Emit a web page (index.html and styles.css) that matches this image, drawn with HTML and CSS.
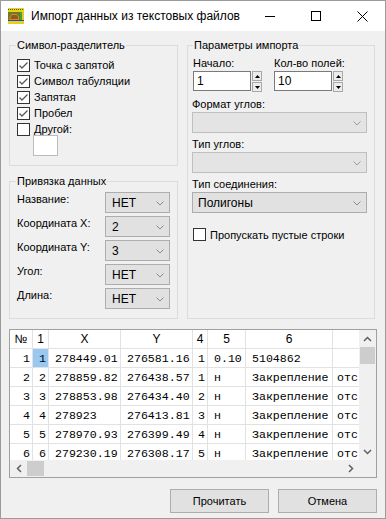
FILE: index.html
```html
<!DOCTYPE html>
<html lang="ru">
<head>
    <meta charset="UTF-8">
    <meta name="viewport" content="width=device-width, initial-scale=1.0">
    <title>Импорт данных из текстовых файлов</title>
    <link rel="stylesheet" href="styles.css">
</head>
<body>

    <div class="window">
        <!-- Title bar -->
        <div class="titlebar">
            <svg class="app-icon" width="16" height="16" viewBox="0 0 16 16">
                <rect width="16" height="16" fill="#6f7b22"/>
                <rect width="16" height="4" fill="#e4d21e"/>
                <path d="M0 1.5h16" stroke="#4d5a1a" stroke-dasharray="1 1"/>
                <path d="M1.5 11.5 L3.5 6.5 H8.5 L10.5 9 V11.5 Z" fill="#8c5a26" stroke="#e0832c"/>
                <rect x="12" y="4" width="2" height="9" fill="#3fa33c"/>
                <rect x="14" y="4" width="2" height="9" fill="#d8d020"/>
                <rect y="12" width="16" height="1" fill="#2c48c0"/>
                <rect y="13" width="16" height="3" fill="#e4d21e"/>
            </svg>
            <span class="title">Импорт данных из текстовых файлов</span>
            <div class="controls">
                <span class="ctl">
                    <svg width="10" height="10"><path d="M0 5.5h10" stroke="#000"/></svg>
                </span>
                <span class="ctl">
                    <svg width="10" height="10"><rect x="0.5" y="0.5" width="9" height="9" fill="none" stroke="#000"/></svg>
                </span>
                <span class="ctl">
                    <svg width="11" height="11"><path d="M0.5 0.5 L10.5 10.5 M10.5 0.5 L0.5 10.5" stroke="#000"/></svg>
                </span>
            </div>
        </div>

        <div class="client">
            <div class="top">
                <div class="left-col">
                    <!-- Separator -->
                    <fieldset class="group sep-group">
                        <legend>Символ-разделитель</legend>
                        <label class="check"><span class="box"><svg width="11" height="11"><path d="M1.5 5.5 L4 8 L9.5 2.5" stroke="#5a5a5a" stroke-width="1.3" fill="none"/></svg></span>Точка с запятой</label>
                        <label class="check"><span class="box"><svg width="11" height="11"><path d="M1.5 5.5 L4 8 L9.5 2.5" stroke="#5a5a5a" stroke-width="1.3" fill="none"/></svg></span>Символ табуляции</label>
                        <label class="check"><span class="box"><svg width="11" height="11"><path d="M1.5 5.5 L4 8 L9.5 2.5" stroke="#5a5a5a" stroke-width="1.3" fill="none"/></svg></span>Запятая</label>
                        <label class="check"><span class="box"><svg width="11" height="11"><path d="M1.5 5.5 L4 8 L9.5 2.5" stroke="#5a5a5a" stroke-width="1.3" fill="none"/></svg></span>Пробел</label>
                        <label class="check"><span class="box"></span>Другой:</label>
                        <div class="other-input"></div>
                    </fieldset>

                    <!-- Binding -->
                    <fieldset class="group bind-group">
                        <legend>Привязка данных</legend>
                        <div class="bind-row">
                            <span class="lbl">Название:</span>
                            <div class="combo"><span>НЕТ</span><svg width="8" height="5"><path d="M0.5 0.5 L4 4 L7.5 0.5" stroke="#8a8a8a" fill="none"/></svg></div>
                        </div>
                        <div class="bind-row">
                            <span class="lbl">Координата X:</span>
                            <div class="combo"><span>2</span><svg width="8" height="5"><path d="M0.5 0.5 L4 4 L7.5 0.5" stroke="#8a8a8a" fill="none"/></svg></div>
                        </div>
                        <div class="bind-row">
                            <span class="lbl">Координата Y:</span>
                            <div class="combo"><span>3</span><svg width="8" height="5"><path d="M0.5 0.5 L4 4 L7.5 0.5" stroke="#8a8a8a" fill="none"/></svg></div>
                        </div>
                        <div class="bind-row">
                            <span class="lbl">Угол:</span>
                            <div class="combo"><span>НЕТ</span><svg width="8" height="5"><path d="M0.5 0.5 L4 4 L7.5 0.5" stroke="#8a8a8a" fill="none"/></svg></div>
                        </div>
                        <div class="bind-row">
                            <span class="lbl">Длина:</span>
                            <div class="combo"><span>НЕТ</span><svg width="8" height="5"><path d="M0.5 0.5 L4 4 L7.5 0.5" stroke="#8a8a8a" fill="none"/></svg></div>
                        </div>
                    </fieldset>
                </div>

                <!-- Import params -->
                <fieldset class="group params-group">
                    <legend>Параметры импорта</legend>
                    <div class="spin-row">
                        <div class="spin-field">
                            <span class="field-label first">Начало:</span>
                            <div class="spin">
                                <div class="spin-input">1</div>
                                <div class="spin-btns">
                                    <span><svg width="5" height="3"><path d="M0 3 L2.5 0 L5 3Z" fill="#000"/></svg></span>
                                    <span><svg width="5" height="3"><path d="M0 0 L2.5 3 L5 0Z" fill="#000"/></svg></span>
                                </div>
                            </div>
                        </div>
                        <div class="spin-field">
                            <span class="field-label first">Кол-во полей:</span>
                            <div class="spin">
                                <div class="spin-input">10</div>
                                <div class="spin-btns">
                                    <span><svg width="5" height="3"><path d="M0 3 L2.5 0 L5 3Z" fill="#000"/></svg></span>
                                    <span><svg width="5" height="3"><path d="M0 0 L2.5 3 L5 0Z" fill="#000"/></svg></span>
                                </div>
                            </div>
                        </div>
                    </div>

                    <span class="field-label angle-fmt">Формат углов:</span>
                    <div class="combo wide disabled"><span></span><svg width="8" height="5"><path d="M0.5 0.5 L4 4 L7.5 0.5" stroke="#9a9a9a" fill="none"/></svg></div>

                    <span class="field-label">Тип углов:</span>
                    <div class="combo wide disabled"><span></span><svg width="8" height="5"><path d="M0.5 0.5 L4 4 L7.5 0.5" stroke="#9a9a9a" fill="none"/></svg></div>

                    <span class="field-label">Тип соединения:</span>
                    <div class="combo wide"><span>Полигоны</span><svg width="8" height="5"><path d="M0.5 0.5 L4 4 L7.5 0.5" stroke="#8a8a8a" fill="none"/></svg></div>

                    <label class="check skip"><span class="box"></span>Пропускать пустые строки</label>
                </fieldset>
            </div>

            <!-- Preview grid -->
            <div class="grid-box">
                <div class="viewport">
                    <div class="cells">
                        <span class="h">№</span><span class="h">1</span><span class="h">X</span><span class="h">Y</span><span class="h">4</span><span class="h">5</span><span class="h">6</span><span class="h"></span>

                        <span class="r">1</span><span class="r sel">1</span><span>278449.01</span><span>276581.16</span><span class="r">1</span><span>0.10</span><span>5104862</span><span class="last"></span>
                        <span class="r">2</span><span class="r">2</span><span>278859.82</span><span>276438.57</span><span class="r">1</span><span>н</span><span>Закрепление</span><span class="last">отс</span>
                        <span class="r">3</span><span class="r">3</span><span>278853.98</span><span>276434.40</span><span class="r">2</span><span>н</span><span>Закрепление</span><span class="last">отс</span>
                        <span class="r">4</span><span class="r">4</span><span>278923</span><span>276413.81</span><span class="r">3</span><span>н</span><span>Закрепление</span><span class="last">отс</span>
                        <span class="r">5</span><span class="r">5</span><span>278970.93</span><span>276399.49</span><span class="r">4</span><span>н</span><span>Закрепление</span><span class="last">отс</span>
                        <span class="r">6</span><span class="r">6</span><span>279230.19</span><span>276308.17</span><span class="r">5</span><span>н</span><span>Закрепление</span><span class="last">отс</span>
                    </div>
                </div>
                <div class="vscroll">
                    <span class="arrow"><svg width="9" height="6"><path d="M1 5 L4.5 1.5 L8 5" stroke="#606060" stroke-width="1.5" fill="none"/></svg></span>
                    <span class="thumb"></span>
                    <span class="track"></span>
                    <span class="arrow"><svg width="9" height="6"><path d="M1 1 L4.5 4.5 L8 1" stroke="#606060" stroke-width="1.5" fill="none"/></svg></span>
                </div>
                <div class="hscroll">
                    <span class="arrow"><svg width="6" height="9"><path d="M5 1 L1.5 4.5 L5 8" stroke="#606060" stroke-width="1.5" fill="none"/></svg></span>
                    <span class="thumb"></span>
                    <span class="track"></span>
                    <span class="arrow"><svg width="6" height="9"><path d="M1 1 L4.5 4.5 L1 8" stroke="#606060" stroke-width="1.5" fill="none"/></svg></span>
                </div>
                <div class="corner"></div>
            </div>

            <div class="buttons">
                <button class="btn">Прочитать</button>
                <button class="btn">Отмена</button>
            </div>
        </div>
    </div>

</body>
</html>
```

FILE: styles.css
```css
* {
    box-sizing: border-box;
}

body {
    margin: 0;
    font-family: "Liberation Sans", Arial, sans-serif;
    font-size: 11px;
    color: #000;
    background-color: #fff;
}

.window {
    width: 386px;
    height: 519px;
    border: 1px solid #9b9b9b;
    background-color: #f0f0f0;
    display: flex;
    flex-direction: column;
}

/* Title bar */
.titlebar {
    height: 30px;
    flex-shrink: 0;
    background-color: #fff;
    display: flex;
    align-items: center;
}

.app-icon {
    margin: 0 7px;
}

.title {
    flex: 1;
    font-size: 12px;
}

.controls {
    display: flex;
    height: 30px;
}

.ctl {
    width: 46px;
    display: flex;
    align-items: center;
    justify-content: center;
}

/* Client area */
.client {
    padding: 8px 8px 0;
}

.top {
    display: flex;
    gap: 9px;
    height: 280px;
}

.left-col {
    width: 169px;
    display: flex;
    flex-direction: column;
    gap: 9px;
}

.group {
    margin: 0;
    min-width: 0;
    border: 1px solid #dcdcdc;
}

.group legend {
    font-size: 11px;
    line-height: 12px;
    padding: 0 1px;
}

.sep-group {
    height: 127px;
    padding: 6px 7px 0;
}

.sep-group legend,
.bind-group legend {
    margin-left: -1px;
}

.bind-group {
    height: 144px;
    padding: 5px 7px 0;
}

.params-group {
    width: 188px;
    height: 280px;
    padding: 0 4px;
}

.params-group legend {
    margin-left: 1px;
}

/* Checkboxes */
.check {
    display: flex;
    align-items: center;
    height: 16px;
    gap: 4px;
}

.box {
    width: 13px;
    height: 13px;
    border: 1px solid #333;
    background-color: #fff;
    display: flex;
    align-items: center;
    justify-content: center;
}

.other-input {
    width: 25px;
    height: 21px;
    margin: -2px 0 0 16px;
    border: 1px solid #bcbcbc;
    background-color: #fff;
}

.check.skip {
    height: 13px;
    margin-top: 15px;
    margin-left: 1px;
}

/* Combos */
.bind-row {
    display: flex;
    height: 21px;
    margin-bottom: 3px;
}

.bind-row .lbl {
    width: 88px;
    line-height: 13px;
    padding-top: 1px;
}

.combo {
    width: 65px;
    height: 21px;
    border: 1px solid #adadad;
    background-color: #e1e1e1;
    display: flex;
    align-items: center;
    justify-content: space-between;
    padding: 1px 5px 0 6px;
    font-size: 12px;
}

.combo.wide {
    width: 175px;
    margin-top: 1px;
    padding-left: 5px;
}

.combo.disabled {
    background-color: #e4e4e4;
    border-color: #bfbfbf;
}

.field-label {
    display: block;
    line-height: 13px;
    margin-top: 5px;
}

.field-label.first {
    margin-top: 0;
}

.field-label.angle-fmt {
    margin-top: 6px;
}

/* Spinners */
.spin-row {
    display: flex;
    margin-top: 6px;
    padding-left: 1px;
}

.spin-field {
    width: 81px;
}

.spin {
    display: flex;
    gap: 1px;
    margin-top: 1px;
}

.spin-input {
    width: 58px;
    height: 20px;
    border: 1px solid #7a7a7a;
    background-color: #fff;
    font-size: 12px;
    line-height: 18px;
    padding-left: 3px;
}

.spin-btns {
    display: flex;
    flex-direction: column;
    gap: 1px;
}

.spin-btns span {
    width: 10px;
    height: 10px;
    border: 1px solid #a8a8a8;
    background-color: #ececec;
    display: flex;
    align-items: center;
    justify-content: center;
}

/* Preview grid */
.grid-box {
    margin-top: 10px;
    height: 149px;
    border: 1px solid #a0a0a0;
    background-color: #fff;
    display: grid;
    grid-template-columns: 1fr 17px;
    grid-template-rows: 1fr 17px;
}

.viewport {
    overflow: hidden;
    background-color: #fff;
}

.cells {
    display: grid;
    grid-template-columns: 23px 16px 72px 72px 15px 38px 87px 60px;
    grid-auto-rows: 19px;
    width: max-content;
}

.cells span {
    border-right: 1px solid #e2e2e2;
    border-bottom: 1px solid #e2e2e2;
    white-space: nowrap;
    overflow: hidden;
    padding: 1px 5px 0 6px;
    line-height: 17px;
    font-family: "Liberation Mono", "Courier New", monospace;
    font-size: 11.6px;
}

.cells span.last {
    padding: 1px 0 0 4px;
}

.cells span.h {
    font-family: "Liberation Sans", Arial, sans-serif;
    font-size: 12px;
    text-align: center;
    padding: 0;
    line-height: 18px;
}

.cells span.r {
    text-align: right;
    padding-left: 0;
    padding-right: 2px;
}

.cells span.sel {
    background-color: #99c9f3;
}

.vscroll,
.hscroll {
    background-color: #f0f0f0;
    display: flex;
}

.vscroll {
    flex-direction: column;
}

.arrow {
    width: 17px;
    height: 17px;
    flex-shrink: 0;
    display: flex;
    align-items: center;
    justify-content: center;
}

.vscroll .thumb {
    height: 17px;
    margin: 0 1px;
    background-color: #cdcdcd;
}

.hscroll .thumb {
    width: 17px;
    margin: 1px 0;
    background-color: #cdcdcd;
}

.track {
    flex: 1;
}

.corner {
    background-color: #f0f0f0;
}

/* Buttons */
.buttons {
    display: flex;
    justify-content: flex-end;
    gap: 9px;
    margin-top: 11px;
}

.btn {
    width: 99px;
    height: 24px;
    border: 1px solid #adadad;
    background-color: #e1e1e1;
    font-family: "Liberation Sans", Arial, sans-serif;
    font-size: 11px;
    color: #000;
    padding: 0;
}
```
